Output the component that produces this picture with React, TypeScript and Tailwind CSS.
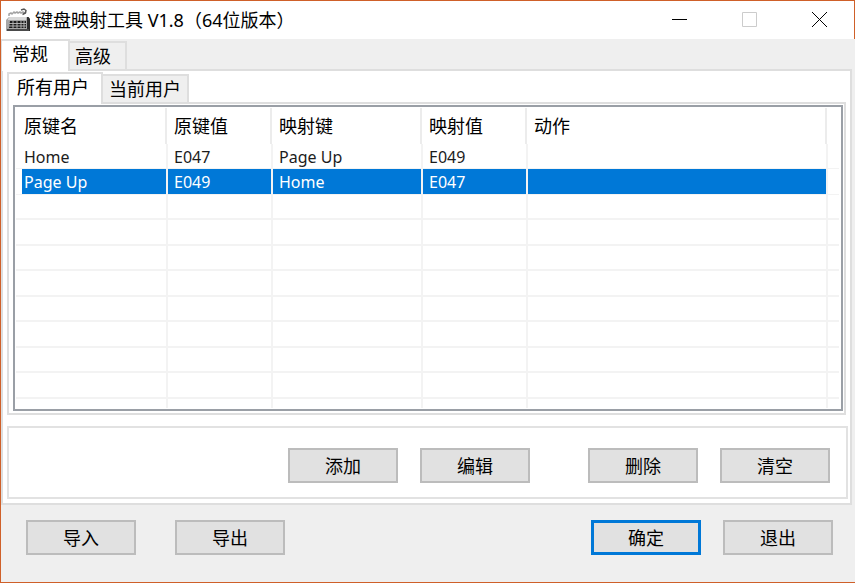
import { useState } from "react";
import clsx from "clsx";

interface Mapping {
  name: string;
  code: string;
  target: string;
  targetCode: string;
  action: string;
}

const mappings: Mapping[] = [
  { name: "Home", code: "E047", target: "Page Up", targetCode: "E049", action: "" },
  { name: "Page Up", code: "E049", target: "Home", targetCode: "E047", action: "" },
];

const columns = ["原键名", "原键值", "映射键", "映射值", "动作"];
const emptyRows = [0, 1, 2, 3, 4, 5, 6, 7];

function KeyboardIcon() {
  return (
    <svg width="24" height="24" viewBox="0 0 24 24" aria-hidden="true">
      {/* cable */}
      <path d="M3 8V6l2-1 1 1 2-2 1 1 2-1 1 1 2-1 1 1 2-1 1 1 2-1" fill="none" stroke="#a2a2a2" strokeWidth="1.500" />
      <path d="M15 2l3-1 2 1.500-.5 2.500-3 1.500" fill="none" stroke="#555" strokeWidth="1.400" />
      {/* body */}
      <path d="M3 9h19l2 2v12H0V12z" fill="#a6a6a6" />
      <path d="M2 11l1.500-2h17L20 12H2z" fill="#d8d8d8" />
      <path d="M21 9h1.500l1.500 2v12h-3z" fill="#2b2b2b" />
      <path d="M1 21h22v2H1z" fill="#4a4a4a" />
      <path d="M4 13h16v7H3z" fill="#1c1c1c" />
      <path
        d="M3 15.500h17M3 18h17M7 13v7M11 13v7M15 13v7M18 13v7"
        stroke="#bdbdbd"
        strokeWidth="0.900"
      />
    </svg>
  );
}

interface TabProps {
  label: string;
  active: boolean;
  wide?: boolean;
  onClick: () => void;
}

function Tab({ label, active, wide, onClick }: TabProps) {
  return (
    <button
      role="tab"
      aria-selected={active}
      onClick={onClick}
      className={clsx(
        "border-[#dedede] leading-6 whitespace-nowrap",
        active
          ? "relative z-10 h-8 border-t-2 border-r-2 bg-white pb-1"
          : "mb-[2px] h-7 border-t-2 border-r-2 bg-[#efefef]",
        wide && active && "border-l-2 pr-3 pl-2",
        wide && !active && "px-[6px]",
        !wide && active && "border-l px-[10px] pr-5",
        !wide && !active && "pr-[14px] pl-[5px]"
      )}
    >
      {label}
    </button>
  );
}

interface PushButtonProps {
  label: string;
  primary?: boolean;
}

function PushButton({ label, primary }: PushButtonProps) {
  return (
    <button
      className={clsx(
        "h-[35px] w-[110px] bg-[#e1e1e1] hover:bg-[#e5f1fb]",
        primary ? "border-3 border-[#0078d7]" : "border-2 border-[#bcbcbc]"
      )}
    >
      {label}
    </button>
  );
}

export default function App() {
  const [page, setPage] = useState(0);
  const [scope, setScope] = useState(0);
  const [selected, setSelected] = useState(1);

  return (
    <div className="flex min-h-screen flex-col border-y border-l border-[#cf6029] bg-[#efefef] font-['Noto_Sans','Noto_Sans_CJK_SC',sans-serif] text-lg text-black">
      {/* Title bar */}
      <header className="flex h-[38px] items-center border-r border-[#cf6029] bg-white pl-[5px]">
        <KeyboardIcon />
        <h1 className="ml-[5px] flex-1">键盘映射工具 V1.8（64位版本）</h1>
        <div className="flex pb-[2px]">
          <button aria-label="最小化" className="flex h-9 w-[70px] items-center justify-center">
            <svg width="15" height="15" viewBox="0 0 15 15">
              <path d="M0 7.500h15" stroke="#000" />
            </svg>
          </button>
          <button aria-label="最大化" disabled className="flex h-9 w-[70px] items-center justify-center">
            <svg width="15" height="15" viewBox="0 0 15 15">
              <path d="M.5.5h14v14H.5z" fill="none" stroke="#ccc" />
            </svg>
          </button>
          <button aria-label="关闭" className="flex h-9 w-[70px] items-center justify-center">
            <svg width="15" height="15" viewBox="0 0 15 15">
              <path d="M0 0l15 15M15 0L0 15" stroke="#000" />
            </svg>
          </button>
        </div>
      </header>

      {/* Outer tabs */}
      <div role="tablist" className="-mb-[2px] flex items-end">
        <Tab label="常规" active={page === 0} onClick={() => setPage(0)} />
        <Tab label="高级" active={page === 1} onClick={() => setPage(1)} />
      </div>
      <main className="mr-[3px] border-2 border-[#dedede] bg-white pt-px pb-1">
        <div role="tablist" className="-mb-[2px] ml-1 flex items-end">
          <Tab label="所有用户" wide active={scope === 0} onClick={() => setScope(0)} />
          <Tab label="当前用户" wide active={scope === 1} onClick={() => setScope(1)} />
        </div>
        <section className="mx-1 border-2 border-[#dedede] pt-px pr-px pb-[2px] pl-1">
          <div className="border-2 border-[#9a9fa6] py-px pr-[2px] pl-px">
            <table className="w-full table-fixed border-separate border-spacing-0 text-left">
              <colgroup>
                <col className="w-[152px]" />
                <col className="w-[105px]" />
                <col className="w-[150px]" />
                <col className="w-[105px]" />
                <col />
                <col className="w-[11px]" />
              </colgroup>
              <thead>
                <tr>
                  {columns.map((title, i) => (
                    <th key={title} className="p-0 font-normal">
                      <div
                        className={clsx(
                          "mr-px h-9 border-r-2 border-[#ececec] leading-9",
                          i === 0 ? "pl-2" : "pl-[6px]"
                        )}
                      >
                        {title}
                      </div>
                    </th>
                  ))}
                  <td />
                </tr>
              </thead>
              <tbody className="text-[16px]">
                {mappings.map((m, row) => (
                  <tr
                    key={m.name}
                    onClick={() => setSelected(row)}
                    className={clsx(
                      "odd:h-[25px] even:h-[26px]",
                      row === selected ? "text-white" : "text-[#1c1c1c]"
                    )}
                  >
                    {[m.name, m.code, m.target, m.targetCode, m.action].map((value, i) => (
                      <td key={i} className="border-r-2 border-b border-[#f3f3f3] p-0">
                        <div
                          className={clsx(
                            i === 0 ? "ml-[6px] pl-[2px]" : "pl-[6px]",
                            row === selected
                              ? "h-[25px] bg-[#0078d7] leading-[27px]"
                              : "h-6 leading-[26px]"
                          )}
                        >
                          {value}
                        </div>
                      </td>
                    ))}
                    <td className="border-b border-[#f3f3f3] p-0" />
                  </tr>
                ))}
                {emptyRows.map((row) => (
                  <tr key={row} className="odd:h-[25px] even:h-[26px]">
                    {columns.map((title) => (
                      <td key={title} className="border-r-2 border-b-2 border-[#f3f3f3] p-0" />
                    ))}
                    <td className="border-b-2 border-[#f3f3f3] p-0" />
                  </tr>
                ))}
                {/* Last row is cut off by the list edge */}
                <tr className="h-[9px]">
                  {columns.map((title) => (
                    <td key={title} className="border-r-2 border-[#f3f3f3] p-0" />
                  ))}
                  <td className="p-0" />
                </tr>
              </tbody>
            </table>
          </div>
        </section>

        {/* Edit actions */}
        <div className="mt-[11px] mr-[2px] ml-1 flex justify-end gap-[58px] border-2 border-[#e2e2e2] pt-5 pr-4 pb-[14px]">
          <div className="flex gap-[22px]">
            <PushButton label="添加" />
            <PushButton label="编辑" />
          </div>
          <div className="flex gap-[22px]">
            <PushButton label="删除" />
            <PushButton label="清空" />
          </div>
        </div>
      </main>

      {/* Footer */}
      <footer className="flex justify-between pt-[15px] pr-[22px] pb-6 pl-[25px]">
        <div className="flex gap-[39px]">
          <PushButton label="导入" />
          <PushButton label="导出" />
        </div>
        <div className="flex gap-[22px]">
          <PushButton label="确定" primary />
          <PushButton label="退出" />
        </div>
      </footer>
    </div>
  );
}
